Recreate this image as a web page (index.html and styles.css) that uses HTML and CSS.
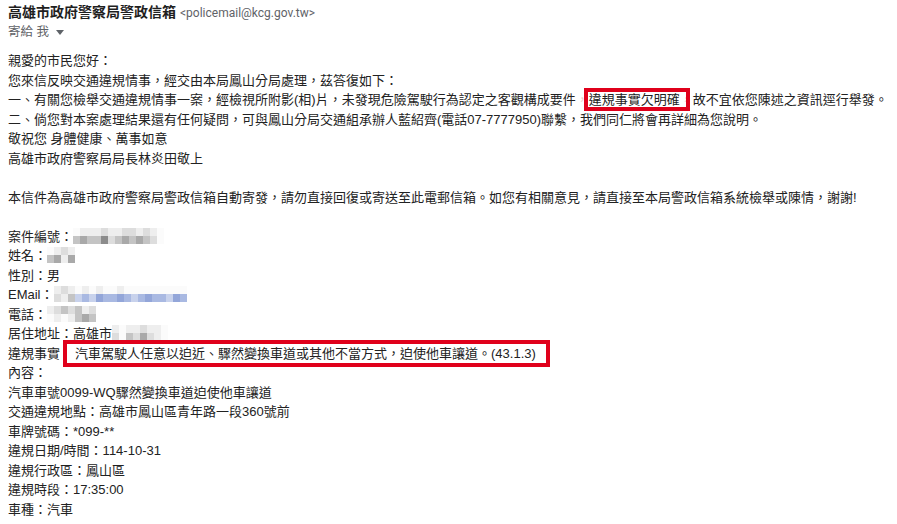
FILE: index.html
```html
<!DOCTYPE html>
<html lang="zh-Hant">
<head>
<meta charset="utf-8">
<title>高雄市政府警察局警政信箱</title>
<link rel="stylesheet" href="styles.css">
</head>
<body>
<div class="mail">
  <div class="head">
    <div class="from"><span class="name">高雄市政府警察局警政信箱</span><span class="addr">&lt;policemail@kcg.gov.tw&gt;</span></div>
    <div class="to">寄給 我<svg class="caret" width="8" height="5" viewBox="0 0 8 5"><path d="M0 0h8L4 5z"/></svg></div>
  </div>
  <div class="body">
    <div class="ln">親愛的市民您好：</div>
    <div class="ln">您來信反映交通違規情事，經交由本局鳳山分局處理，茲答復如下：</div>
    <div class="ln">一、有關您檢舉交通違規情事一案，經檢視所附影(相)片，未發現危險駕駛行為認定之客觀構成要件<span class="faint">，</span><span class="mark mark1">違規事實欠明確</span><span class="faint">，</span>故不宜依您陳述之資訊逕行舉發。</div>
    <div class="ln">二、倘您對本案處理結果還有任何疑問，可與鳳山分局交通組承辦人藍紹齊(電話07-7777950)聯繫，我們同仁將會再詳細為您說明。</div>
    <div class="ln">敬祝您 身體健康、萬事如意</div>
    <div class="ln">高雄市政府警察局局長林炎田敬上</div>
    <div class="ln blank"></div>
    <div class="ln">本信件為高雄市政府警察局警政信箱自動寄發，請勿直接回復或寄送至此電郵信箱。如您有相關意見，請直接至本局警政信箱系統檢舉或陳情，謝謝!</div>
    <div class="ln blank"></div>
    <div class="ln">案件編號：<span class="pix"><span class="row"><i class="g0"></i><i class="g1"></i><i class="g1"></i><i class="g1"></i><i class="g2"></i><i class="g1"></i><i class="g1"></i><i class="g2"></i><i class="g2"></i><i class="g1"></i><i class="g2"></i><i class="g1"></i><i class="g0"></i></span><span class="row"><i class="g3"></i><i class="g4"></i><i class="g3"></i><i class="g3"></i><i class="g5"></i><i class="g2"></i><i class="g3"></i><i class="g4"></i><i class="g3"></i><i class="g4"></i><i class="g3"></i><i class="g2"></i><i class="g0"></i></span></span></div>
    <div class="ln">姓名：<span class="pix"><span class="row"><i class="g0"></i><i class="g1"></i><i class="g2"></i><i class="g1"></i></span><span class="row"><i class="g3"></i><i class="g4"></i><i class="g1"></i><i class="g4"></i></span></span></div>
    <div class="ln">性別：男</div>
    <div class="ln">EMail：<span class="pix"><span class="row"><i class="g1"></i><i class="g2"></i><i class="g1"></i><i class="g0"></i><i class="g1"></i><i class="g0"></i><i class="g1"></i><i class="g0"></i><i class="g0"></i><i class="g1"></i><i class="g0"></i><i class="g0"></i><i class="g0"></i><i class="g0"></i><i class="g0"></i><i class="g0"></i><i class="g0"></i><i class="g0"></i><i class="g0"></i></span><span class="row"><i class="g2"></i><i class="g1"></i><i class="g3"></i><i class="b1"></i><i class="b2"></i><i class="b1"></i><i class="b3"></i><i class="b2"></i><i class="b2"></i><i class="b3"></i><i class="b2"></i><i class="b1"></i><i class="b2"></i><i class="b3"></i><i class="b2"></i><i class="b2"></i><i class="b1"></i><i class="b3"></i><i class="b2"></i></span></span></div>
    <div class="ln">電話：<span class="pix"><span class="row"><i class="g1"></i><i class="g2"></i><i class="g3"></i><i class="g2"></i><i class="g3"></i><i class="g1"></i><i class="g2"></i></span><span class="row"><i class="g0"></i><i class="g1"></i><i class="g0"></i><i class="g1"></i><i class="g3"></i><i class="g4"></i><i class="g3"></i></span></span></div>
    <div class="ln">居住地址：高雄市<span class="pix"><span class="row"><i class="g1"></i><i class="g0"></i><i class="g1"></i><i class="g1"></i><i class="g2"></i><i class="g1"></i><i class="g1"></i><i class="g0"></i></span><span class="row"><i class="g2"></i><i class="g0"></i><i class="g3"></i><i class="g2"></i><i class="g4"></i><i class="g2"></i><i class="g1"></i><i class="g0"></i></span></span></div>
    <div class="ln">違規事實<span class="mark mark2">汽車駕駛人任意以迫近、驟然變換車道或其他不當方式，迫使他車讓道。(43.1.3)</span></div>
    <div class="ln">內容：</div>
    <div class="ln">汽車車號0099-WQ驟然變換車道迫使他車讓道</div>
    <div class="ln">交通違規地點：高雄市鳳山區青年路一段360號前</div>
    <div class="ln">車牌號碼：*099-**</div>
    <div class="ln">違規日期/時間：114-10-31</div>
    <div class="ln">違規行政區：鳳山區</div>
    <div class="ln">違規時段：17:35:00</div>
    <div class="ln">車種：汽車</div>
  </div>
</div>
</body>
</html>
```
FILE: styles.css
```css
html, body {
  margin: 0;
  padding: 0;
  background: #ffffff;
}
body {
  font-family: "Liberation Sans", "Noto Sans CJK TC", sans-serif;
  color: #222222;
  overflow: hidden;
}
.mail {
  padding: 2px 8px 0 8px;
}
.head {
  display: flex;
  flex-direction: column;
}
.from {
  line-height: 20px;
  display: flex;
  align-items: baseline;
}
.name {
  font-size: 14px;
  font-weight: bold;
  color: #1f1f1f;
}
.addr {
  font-family: "Roboto", "Liberation Sans", sans-serif;
  font-size: 12px;
  color: #5f6368;
  margin-left: 4px;
}
.to {
  font-size: 12.5px;
  line-height: 18px;
  color: #5f6368;
  display: flex;
  align-items: center;
}
.caret {
  fill: #5f6368;
  margin-left: 7px;
  margin-top: 1px;
}
.body {
  margin-top: 10px;
  font-size: 13px;
}
.ln {
  line-height: 19.5px;
  height: 19.5px;
  white-space: nowrap;
}
.faint {
  color: #f3cccc;
}
.mark {
  position: relative;
}
.mark::after {
  content: "";
  position: absolute;
  border: 4px solid #e0001b;
  pointer-events: none;
}
.mark1::after {
  left: -5px;
  right: -10px;
  top: -4px;
  bottom: -4px;
}
.mark2 {
  margin-left: 15px;
}
.mark2::after {
  left: -12px;
  right: -14px;
  top: -6px;
  bottom: -6px;
}
.pix {
  display: inline-flex;
  flex-direction: column;
  vertical-align: top;
  margin-top: 1px;
}
.row {
  display: flex;
}
.pix i {
  display: block;
  width: 7px;
  height: 8px;
}
.g0 { background: #fbfbfb; }
.g1 { background: #eeeeee; }
.g2 { background: #dddddd; }
.g3 { background: #c4c4c4; }
.g4 { background: #a9a9a9; }
.g5 { background: #8c8c8c; }
.b1 { background: #c8d2ec; }
.b2 { background: #a9b9e2; }
.b3 { background: #93a6d9; }
```
